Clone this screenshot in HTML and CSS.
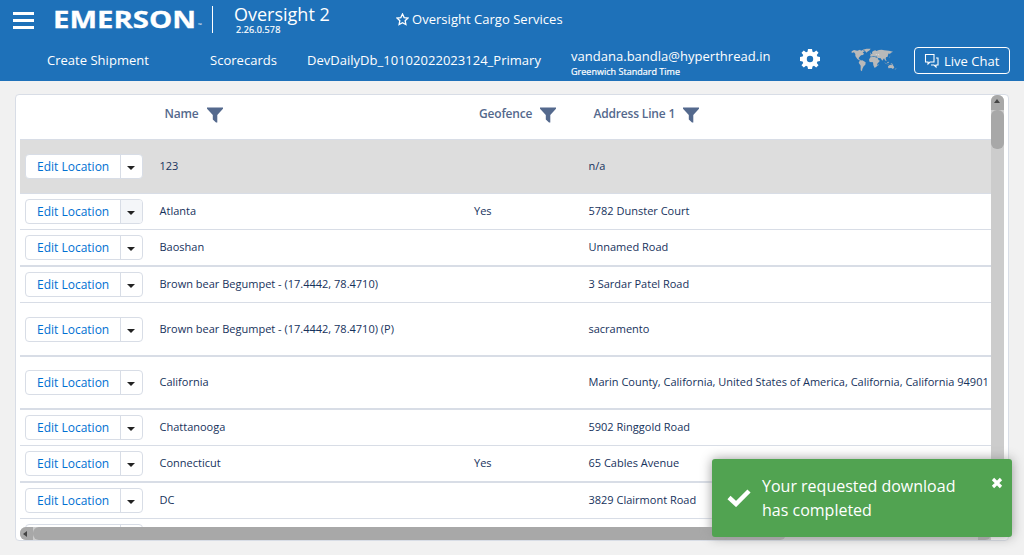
FILE: index.html
```html
<!DOCTYPE html>
<html lang="en">
<head>
<meta charset="utf-8">
<title>Oversight 2</title>
<link rel="stylesheet" href="styles.css">
</head>
<body>
<svg class="defs" width="0" height="0">
  <symbol id="funnel" viewBox="0 0 16 16"><path d="M0 .5h16v1.3L10.300 8v7.500L9 15.500 5.800 12.500V8L0 1.800z"/></symbol>
</svg>
<header class="header">
  <div class="top">
    <div class="burger"><i></i><i></i><i></i></div>
    <svg class="logo" width="150" height="34" viewBox="0 0 150 34"><text class="logo-text" x="-1" y="27.500" textLength="143" lengthAdjust="spacingAndGlyphs">EMERSON</text><text class="logo-tm" x="144" y="27">™</text></svg>
    <div class="divider"></div>
    <div class="product"><div class="product-name">Oversight 2</div><div class="version">2.26.0.578</div></div>
    <div class="company"><svg width="13" height="13" viewBox="0 0 13 13"><path d="M6.500 1l1.650 3.600 3.850.45-2.850 2.650.75 3.900-3.400-1.950-3.400 1.950.75-3.900L1 5.050l3.850-.45z"/></svg><span>Oversight Cargo Services</span></div>
  </div>
  <nav class="nav">
    <a class="create">Create Shipment</a>
    <a class="score">Scorecards</a>
    <a class="db">DevDailyDb_10102022023124_Primary</a>
    <div class="user"><div class="email">vandana.bandla@hyperthread.in</div><div class="zone">Greenwich Standard Time</div></div>
    <svg class="gear" width="20" height="20" viewBox="0 0 20 20"><path fill-rule="evenodd" d="M8 0h4l.5 2.700 1.500.6L16.300 1.600 18.500 3.800 16.800 6.100l.6 1.500L20 8v4l-2.600.5-.6 1.500 1.700 2.200-2.300 2.300-2.200-1.700-1.500.6L12 20H8l-.5-2.600-1.500-.6-2.200 1.700-2.300-2.300L3.200 14l-.6-1.500L0 12V8l2.600-.5.6-1.500L1.500 3.800 3.800 1.600 6 3.300l1.500-.6zM10 6.800a3.200 3.200 0 1 0 0 6.400 3.200 3.200 0 1 0 0-6.400z"/></svg>
    <svg class="world" width="60" height="40" viewBox="0 0 180 120"><path d="M20 34l7-4 10 2 8-3 3 3 5-2 6 4-6 3 4 4-3 4-6 1-4 4-3 4 1 4 5 2 2 3-6-2-6-4-6-9v-6l-4-5-7 2z"/><path d="M53 29l12-3 12 0-3 5-7 4-3 3-4-6z"/><path d="M44 62l8-1 10 6-1 7-5 5-4 8-1 7-4-3 0-14-6-9z"/><path d="M75 49l2-6 5-2-1-5 5-4 5-1 3 2 8-3 8-1 8 2 14 1 12 3-6 3-4 5-2-4-3 5-1 6-5 2-1 5 3 7-5-3-3-6-5 7-5-7-9-1-4-5-4 1-3-2-7 2z"/><path d="M76 52l11-2 11 4 3 7 4 1-8 9-1 8-7 5-4-8-1-9-10-1-2-7z"/><path d="M129 79l5-4 4-1 3 2 2-2 5 8-4 5-5-3-9 1z"/><path d="M117 65l7 6 8 1-1 1-8-1zM127 66l4-1 0 4-4 0zM138 70l7 3-2 1-6-2zM155 83l-3 5-4 2 5-5zM98 74l3-2-2 6-2 0zM137 45l-3 7-3 2 4-5zM77 37l2 5-3 1z"/><path class="sea" d="M91 44l3-2 3 1-1 2zM98 42l4 0 1 5-3-1z"/></svg>
    <a class="chat"><svg width="16" height="16" viewBox="0 0 16 16"><path d="M1.500 1.500h8.500v7.500H6l-2 2v-2H1.500zM12 5h2v7h-2v2l-2-2H7"/></svg><span>Live Chat</span></a>
  </nav>
</header>
<main class="card">
  <div class="viewport">
    <div class="row head">
      <div></div><div class="h1">Name<svg><use href="#funnel"/></svg></div><div class="h2">Geofence<svg><use href="#funnel"/></svg></div><div class="h3">Address Line 1<svg><use href="#funnel"/></svg></div>
    </div>
    <div class="row tall selected"><div class="btn"><span>Edit Location</span><b></b></div><div>123</div><div></div><div>n/a</div></div>
    <div class="row"><div class="btn hover"><span>Edit Location</span><b></b></div><div>Atlanta</div><div>Yes</div><div>5782 Dunster Court</div></div>
    <div class="row thick"><div class="btn"><span>Edit Location</span><b></b></div><div>Baoshan</div><div></div><div>Unnamed Road</div></div>
    <div class="row"><div class="btn"><span>Edit Location</span><b></b></div><div>Brown bear Begumpet - (17.4442, 78.4710)</div><div></div><div>3 Sardar Patel Road</div></div>
    <div class="row tall thick"><div class="btn"><span>Edit Location</span><b></b></div><div>Brown bear Begumpet - (17.4442, 78.4710) (P)</div><div></div><div>sacramento</div></div>
    <div class="row mid thick"><div class="btn"><span>Edit Location</span><b></b></div><div>California</div><div></div><div class="long">Marin County, California, United States of America, California, California 94901</div></div>
    <div class="row"><div class="btn"><span>Edit Location</span><b></b></div><div>Chattanooga</div><div></div><div>5902 Ringgold Road</div></div>
    <div class="row thick"><div class="btn"><span>Edit Location</span><b></b></div><div>Connecticut</div><div>Yes</div><div>65 Cables Avenue</div></div>
    <div class="row"><div class="btn"><span>Edit Location</span><b></b></div><div>DC</div><div></div><div>3829 Clairmont Road</div></div>
    <div class="row"><div class="btn"><span></span><b></b></div><div></div><div></div><div></div></div>
  </div>
  <div class="vbar"><div class="up"><i></i></div><div class="vthumb"></div></div>
  <div class="hbar"><div class="left"><i></i></div><div class="hthumb"></div><div class="right"></div></div>
</main>
<div class="toast">
  <svg class="check" width="24" height="18" viewBox="0 0 24 18"><path d="M2 8.500l7 6.500L22 2"/></svg>
  <div class="message">Your requested download<br>has completed</div>
  <svg class="close" width="12" height="12" viewBox="0 0 12 12"><path d="M2 2l8 8M10 2l-8 8"/></svg>
</div>
</body>
</html>
```
FILE: styles.css
```css
* { box-sizing: border-box; }
body { margin: 0; height: 555px; overflow: hidden; background: #f1f1f1; font-family: "Open Sans", sans-serif; color: #16325c; }
.defs { position: absolute; }
.header { height: 81px; background: #1e71b9; color: #fff; }
.top { display: flex; height: 40px; }
.burger { width: 21px; margin: 12px 0 0 13px; }
.burger i { display: block; height: 3px; margin-bottom: 4px; background: #fff; }
.logo { margin: 0 0 0 20px; fill: #fff; overflow: visible; }
.logo-text { font-size: 24px; font-weight: 700; stroke: #fff; stroke-width: .3; }
.logo-tm { font-size: 5px; }
.divider { width: 1px; height: 27px; margin: 6px 0 0 8px; background: #fff; }
.product { margin: 4px 0 0 21px; width: 100px; white-space: nowrap; }
.product-name { font-size: 18px; line-height: 21px; }
.version { font-size: 9px; line-height: 10px; padding-left: 2px; letter-spacing: .13px; -webkit-text-stroke: .2px #fff; }
.company { display: flex; margin: 11px 0 0 62px; font-size: 13px; line-height: 17px; letter-spacing: .03px; }
.company svg { margin: 2px 3px 0 0; fill: none; stroke: #fff; stroke-width: 1.3; }
.nav { display: flex; height: 41px; font-size: 13px; line-height: 18px; letter-spacing: .02px; white-space: nowrap; }
.nav a { padding-top: 11px; }
.create { width: 163px; margin-left: 47px; }
.score { width: 97px; }
.db { width: 264px; }
.user { width: 229px; padding-top: 7px; }
.zone { font-size: 9px; line-height: 12px; padding-top: 1px; -webkit-text-stroke: .2px #fff; }
.gear { margin-top: 9px; fill: #fff; }
.world { margin-left: 25px; fill: #b9b9b9; }
.sea { fill: #d8d8d8; }
.nav .chat { display: flex; width: 96px; height: 27px; margin: 7px 0 0 9px; padding: 4px 0 0 9px; border: 1px solid #fff; border-radius: 4px; }
.chat svg { margin: 1px 4px 0 0; fill: none; stroke: #fff; stroke-width: 1.1; }
.card { display: grid; grid-template: 432px 13px / 971px 13px; width: 994px; height: 447px; margin: 13px 0 0 15px; padding-left: 4px; border: 1px solid #d8dde6; border-radius: 4px; background: #fff; }
.viewport { overflow: hidden; }
.row { display: grid; grid-template-columns: 139.500px 314.500px 114.500px 402px; height: 36px; padding-top: 5px; border-bottom: 1px solid #d8dde6; font-size: 11px; line-height: 24px; white-space: nowrap; }
.row.thick { height: 37px; border-bottom-width: 2px; }
.row.tall { height: 54px; padding-top: 14px; }
.row.mid { height: 53px; padding-top: 13px; }
.row.head { height: 45px; padding-top: 7px; font-size: 12px; font-weight: 600; letter-spacing: -.18px; color: #54698d; }
.head svg { width: 16px; height: 16px; margin-left: 8px; fill: #54698d; vertical-align: -5px; }
.h1, .h2, .h3 { padding-left: 5px; }
.selected { background: #ddd; }
.btn { display: flex; width: 118px; height: 25px; margin-left: 5px; border: 1px solid #d8dde6; border-radius: 4px; background: #fff; overflow: hidden; }
.btn span { width: 95px; padding-left: 11px; border-right: 1px solid #d8dde6; color: #0070d2; font-size: 12px; line-height: 23px; }
.btn b { flex: 1; }
.btn b::after { content: ""; display: block; margin: 11px 0 0 6px; width: 0; border: 4.5px solid transparent; border-top: 4px solid #222; border-bottom: 0; }
.btn.hover b { background: #f4f6f9; }
.vbar { background: #ccc; border-radius: 6px 6px 0 0; }
.up { height: 15px; background: #a8a8a8; border-radius: 6px 6px 0 0; padding: 4px 0 0 3px; }
.up i { display: block; width: 0; border: 3px solid transparent; border-bottom: 4px solid #444; border-top: 0; }
.vthumb { height: 39px; background: #a8a8a8; border-radius: 6px; }
.hbar { display: flex; background: #ccc; border-radius: 6px 0 0 6px; }
.left { width: 13px; background: #a8a8a8; border-radius: 6px 0 0 6px; padding: 4px 0 0 3px; }
.left i { display: block; width: 0; border: 3px solid transparent; border-right: 4px solid #444; border-left: 0; }
.hthumb { width: 753px; background: #a8a8a8; border-radius: 6px; }
.right { width: 13px; margin-left: auto; background: #a8a8a8; border-radius: 0 0 6px 0; }
.toast { position: absolute; left: 712px; top: 459px; display: flex; width: 300px; height: 78px; border-radius: 3px; background: #51a351; box-shadow: 0 0 12px #999; color: #fff; }
.check { margin: 30px 0 0 15px; fill: none; stroke: #fff; stroke-width: 4.500; }
.message { width: 200px; margin: 15px 0 0 11px; font-size: 16px; line-height: 24px; white-space: nowrap; }
.close { margin: 18px 0 0 29px; fill: none; stroke: #fff; stroke-width: 3.200; }
```
